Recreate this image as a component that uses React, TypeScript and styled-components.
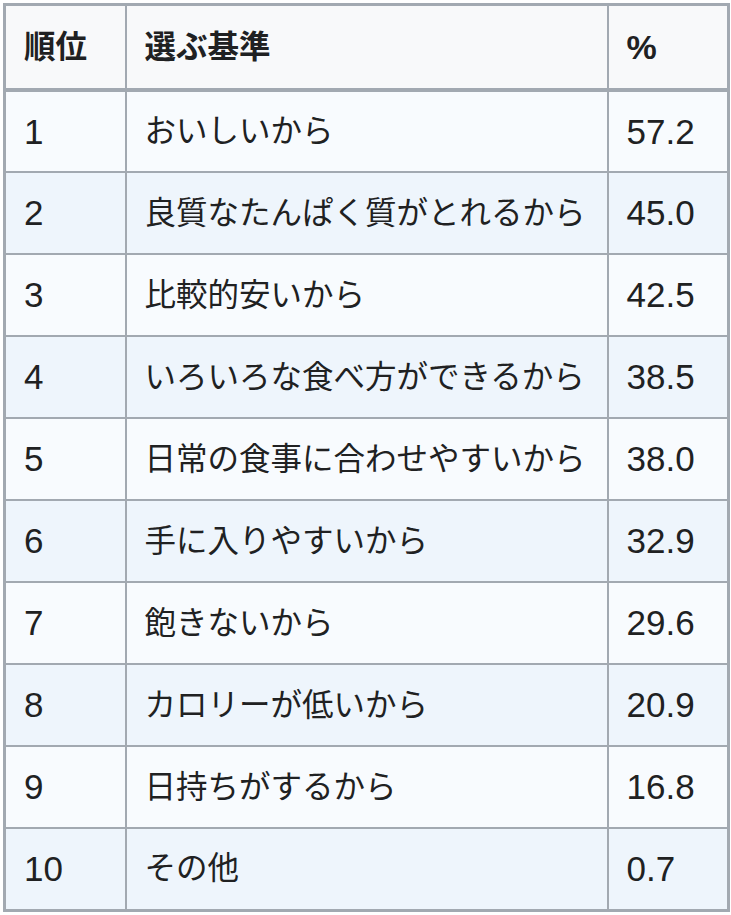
import React from 'react';
import styled, { createGlobalStyle } from 'styled-components';

const GlobalStyle = createGlobalStyle`
  html, body {
    margin: 0;
    padding: 0;
    background: #ffffff;
  }
  body {
    font-family: 'Liberation Sans', 'Noto Sans CJK JP', sans-serif;
    color: #202122;
  }
`;

const Wrapper = styled.div`
  padding: 3px 4px 3px 3px;
`;

const Table = styled.table`
  width: 724px;
  border-collapse: collapse;
  table-layout: fixed;
  border: 3px solid #a2a9b1;
  font-size: 31.5px;
  line-height: 1.3;
`;

const HeadCell = styled.th<{ $num?: boolean }>`
  height: 82px;
  padding: 0 18px;
  text-align: left;
  font-weight: 700;
  font-size: ${(p) => (p.$num ? '34px' : '31.5px')};
  background: #f8f9fa;
  border: 2px solid #a2a9b1;
  border-bottom-width: 4px;
  white-space: nowrap;
`;

const Row = styled.tr<{ $alt: boolean }>`
  height: 82px;
  background: ${(p) => (p.$alt ? '#eef5fc' : '#f8fbfe')};
`;

const Cell = styled.td<{ $num?: boolean }>`
  padding: 0 18px;
  border: 2px solid #a2a9b1;
  white-space: nowrap;
  vertical-align: middle;
  font-size: ${(p) => (p.$num ? '35px' : '31.5px')};
`;

const rows: [string, string, string][] = [
  ['1', 'おいしいから', '57.2'],
  ['2', '良質なたんぱく質がとれるから', '45.0'],
  ['3', '比較的安いから', '42.5'],
  ['4', 'いろいろな食べ方ができるから', '38.5'],
  ['5', '日常の食事に合わせやすいから', '38.0'],
  ['6', '手に入りやすいから', '32.9'],
  ['7', '飽きないから', '29.6'],
  ['8', 'カロリーが低いから', '20.9'],
  ['9', '日持ちがするから', '16.8'],
  ['10', 'その他', '0.7'],
];

const App: React.FC = () => (
  <Wrapper>
    <GlobalStyle />
    <Table>
      <colgroup>
        <col style={{ width: 121 }} />
        <col style={{ width: 482 }} />
        <col style={{ width: 121 }} />
      </colgroup>
      <thead>
        <tr>
          <HeadCell>順位</HeadCell>
          <HeadCell>選ぶ基準</HeadCell>
          <HeadCell $num>%</HeadCell>
        </tr>
      </thead>
      <tbody>
        {rows.map(([rank, reason, pct], i) => (
          <Row key={rank} $alt={i % 2 === 1}>
            <Cell $num>{rank}</Cell>
            <Cell>{reason}</Cell>
            <Cell $num>{pct}</Cell>
          </Row>
        ))}
      </tbody>
    </Table>
  </Wrapper>
);

export default App;
